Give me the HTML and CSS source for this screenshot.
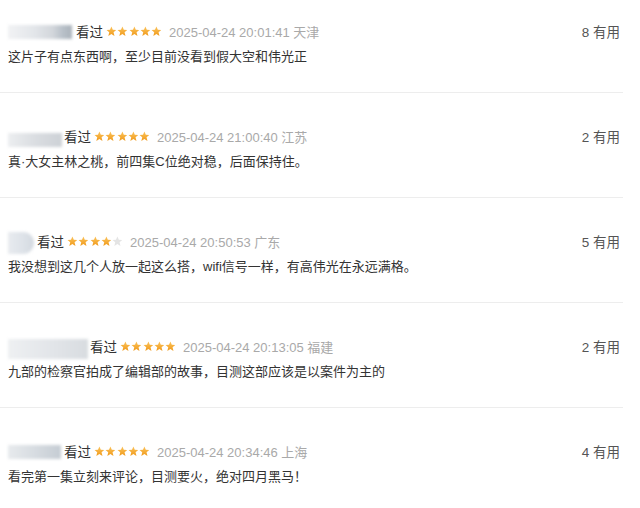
FILE: index.html
```html
<!DOCTYPE html>
<html lang="zh">
<head>
<meta charset="utf-8">
<link rel="stylesheet" href="styles.css">
</head>
<body>
<svg width="0" height="0" class="defs">
  <defs>
    <linearGradient id="g" x1="0" y1="0" x2="0" y2="1">
      <stop offset="0" stop-color="#fbc35a"/>
      <stop offset="1" stop-color="#f09a1c"/>
    </linearGradient>
    <symbol id="star" viewBox="0 0 20 20">
      <polygon points="10,1 12.6,7 19,7.4 14,11.6 15.7,18.5 10,14.7 4.3,18.5 6,11.6 1,7.4 7.4,7"/>
    </symbol>
  </defs>
</svg>
<div class="list">
  <div class="item">
    <div class="head">
      <span class="name n1"></span>
      <span class="seen">看过</span>
      <span class="stars"><svg class="on"><use href="#star"/></svg><svg class="on"><use href="#star"/></svg><svg class="on"><use href="#star"/></svg><svg class="on"><use href="#star"/></svg><svg class="on"><use href="#star"/></svg></span>
      <span class="time">2025-04-24 20:01:41 天津</span>
      <span class="vote">8 有用</span>
    </div>
    <p class="text">这片子有点东西啊，至少目前没看到假大空和伟光正</p>
  </div>
  <div class="item">
    <div class="head">
      <span class="name n2"></span>
      <span class="seen">看过</span>
      <span class="stars"><svg class="on"><use href="#star"/></svg><svg class="on"><use href="#star"/></svg><svg class="on"><use href="#star"/></svg><svg class="on"><use href="#star"/></svg><svg class="on"><use href="#star"/></svg></span>
      <span class="time">2025-04-24 21:00:40 江苏</span>
      <span class="vote">2 有用</span>
    </div>
    <p class="text">真·大女主林之桃，前四集C位绝对稳，后面保持住。</p>
  </div>
  <div class="item">
    <div class="head">
      <span class="name n3"></span>
      <span class="seen">看过</span>
      <span class="stars"><svg class="on"><use href="#star"/></svg><svg class="on"><use href="#star"/></svg><svg class="on"><use href="#star"/></svg><svg class="on"><use href="#star"/></svg><svg class="off"><use href="#star"/></svg></span>
      <span class="time">2025-04-24 20:50:53 广东</span>
      <span class="vote">5 有用</span>
    </div>
    <p class="text">我没想到这几个人放一起这么搭，wifi信号一样，有高伟光在永远满格。</p>
  </div>
  <div class="item">
    <div class="head">
      <span class="name n4"></span>
      <span class="seen">看过</span>
      <span class="stars"><svg class="on"><use href="#star"/></svg><svg class="on"><use href="#star"/></svg><svg class="on"><use href="#star"/></svg><svg class="on"><use href="#star"/></svg><svg class="on"><use href="#star"/></svg></span>
      <span class="time">2025-04-24 20:13:05 福建</span>
      <span class="vote">2 有用</span>
    </div>
    <p class="text">九部的检察官拍成了编辑部的故事，目测这部应该是以案件为主的</p>
  </div>
  <div class="item">
    <div class="head">
      <span class="name n5"></span>
      <span class="seen">看过</span>
      <span class="stars"><svg class="on"><use href="#star"/></svg><svg class="on"><use href="#star"/></svg><svg class="on"><use href="#star"/></svg><svg class="on"><use href="#star"/></svg><svg class="on"><use href="#star"/></svg></span>
      <span class="time">2025-04-24 20:34:46 上海</span>
      <span class="vote">4 有用</span>
    </div>
    <p class="text">看完第一集立刻来评论，目测要火，绝对四月黑马！</p>
  </div>
</div>
</body>
</html>
```

FILE: styles.css
```css
html, body {
  margin: 0;
  padding: 0;
  background: #fff;
}
body {
  width: 640px;
  height: 508px;
  overflow: hidden;
  font-family: "Liberation Sans", "Noto Sans CJK SC", sans-serif;
  color: #333;
}
.defs {
  position: absolute;
  width: 0;
  height: 0;
}
.list {
  width: 623px;
}
.item {
  padding: 33px 0 25px 8px;
  border-bottom: 1px solid #ededed;
}
.item:first-child {
  padding-top: 21px;
}
.head {
  display: flex;
  align-items: center;
  height: 20px;
  font-size: 13.5px;
}
.name {
  display: block;
  height: 14px;
  filter: blur(1.5px);
  flex: none;
}
.n1 {
  width: 64px;
  background: linear-gradient(90deg, #f1f2f4 0%, #e3e6ea 40%, #d2d6db 70%, #b9c1c9 85%, #aab2ba 100%);
  margin-right: 4px;
  margin-top: 2px;
}
.n2 {
  width: 54px;
  margin-top: 8px;
  background: linear-gradient(90deg, #eceef0 0%, #dadde1 50%, #cdd1d6 100%);
  margin-right: 2px;
}
.n3 {
  width: 26px;
  height: 22px;
  margin-top: 4px;
  border-radius: 0 11px 11px 0;
  background: linear-gradient(90deg, #e8ebef 0%, #dde2e8 60%, #d3d9e0 100%);
  margin-right: 3px;
}
.n4 {
  width: 80px;
  height: 20px;
  margin-top: 6px;
  background: linear-gradient(90deg, #eef0f2 0%, #e1e4e8 60%, #d8dce0 100%);
  margin-right: 2px;
}
.n5 {
  width: 53px;
  margin-top: 2px;
  background: linear-gradient(90deg, #e7eaed 0%, #d7dce1 50%, #c5ccd3 100%);
  margin-right: 3px;
}
.seen {
  color: #333;
  font-family: "Noto Sans CJK SC", sans-serif;
  margin-right: 3px;
}
.stars {
  display: flex;
  gap: 0.5px;
  margin-right: 7px;
}
.stars svg {
  width: 10.8px;
  height: 10.8px;
}
.stars .on {
  fill: url(#g);
}
.stars .off {
  fill: #e4e4e4;
}
.time {
  color: #a9a9a9;
  font-size: 13px;
}
.vote {
  margin-left: auto;
  margin-right: 3px;
  color: #555;
  font-size: 13.5px;
}
.text {
  margin: 6px 0 0;
  line-height: 20px;
  font-size: 13px;
  color: #333;
  font-family: "Liberation Sans", "Noto Sans CJK SC", sans-serif;
}
```
